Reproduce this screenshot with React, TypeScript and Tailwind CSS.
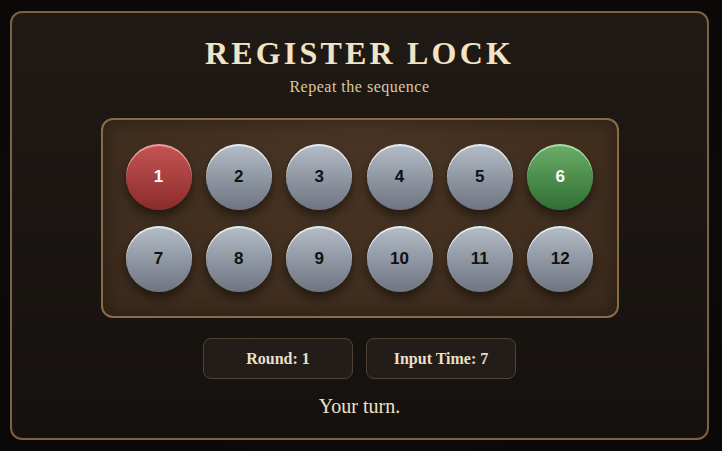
import React from 'react';

const serif = "font-['Liberation_Serif','DejaVu_Serif',serif]";

const Key: React.FC<{ n: number; tone: 'gray' | 'red' | 'green' }> = ({ n, tone }) => {
    const toneCls =
        tone === 'red'
            ? 'bg-gradient-to-b from-[#c65555] to-[#8c2b2b] text-white shadow-[inset_0_2px_0_rgba(255,220,220,0.55),0_6px_10px_rgba(0,0,0,0.45)]'
            : tone === 'green'
              ? 'bg-gradient-to-b from-[#6cae68] to-[#2f6f34] text-white shadow-[inset_0_2px_0_rgba(220,255,220,0.55),0_6px_10px_rgba(0,0,0,0.45)]'
              : 'bg-gradient-to-b from-[#b5bdc8] to-[#6e7580] text-[#111] shadow-[inset_0_2px_0_rgba(235,240,248,0.8),0_6px_10px_rgba(0,0,0,0.45)]';
    return (
        <button
            className={`w-[66px] h-[66px] rounded-full flex items-center justify-center font-['Liberation_Sans',Arial,sans-serif] font-bold text-[17px] ${toneCls}`}
        >
            {n}
        </button>
    );
};

export default function App() {
    const keys = Array.from({ length: 12 }, (_, i) => i + 1);
    return (
        <div className="w-[722px] h-[451px] bg-[radial-gradient(ellipse_at_center,#1a1612_0%,#0a0908_80%)] pl-[10px] py-[11px] overflow-hidden">
            <div className="w-[699px] h-full rounded-[12px] border-2 border-[#7d6242] bg-gradient-to-b from-[#201a16] to-[#15110e] flex flex-col items-center pt-[22px]">
                <h1 className={`${serif} text-[32px] leading-[36px] font-bold tracking-[3.2px] text-[#f1e3c5]`}>REGISTER LOCK</h1>
                <p className={`${serif} text-[16px] leading-[20px] mt-[6px] tracking-[0.5px] text-[#dcc8a2]`}>Repeat the sequence</p>

                <div className="mt-[21px] w-[518px] rounded-[12px] border-2 border-[#8b6b45] bg-[radial-gradient(ellipse_at_top,#4a3524_0%,#3b2a1c_100%)] px-[23px] py-[24px] grid grid-cols-6 gap-x-[14px] gap-y-[16px] shadow-[inset_0_0_20px_rgba(0,0,0,0.35)]">
                    {keys.map((n) => (
                        <Key key={n} n={n} tone={n === 1 ? 'red' : n === 6 ? 'green' : 'gray'} />
                    ))}
                </div>

                <div className="mt-[20px] flex gap-[13px]">
                    <div className={`${serif} w-[150px] h-[41px] rounded-[8px] border border-[#4f4332] bg-[#221d19] flex items-center justify-center text-[16px] font-bold text-[#eadfc5]`}>
                        Round: 1
                    </div>
                    <div className={`${serif} w-[150px] h-[41px] rounded-[8px] border border-[#4f4332] bg-[#221d19] flex items-center justify-center text-[16px] font-bold text-[#eadfc5]`}>
                        Input Time: 7
                    </div>
                </div>

                <p className={`${serif} mt-[15px] text-[20px] leading-[24px] text-[#f0e1c2]`}>Your turn.</p>
            </div>
        </div>
    );
}
